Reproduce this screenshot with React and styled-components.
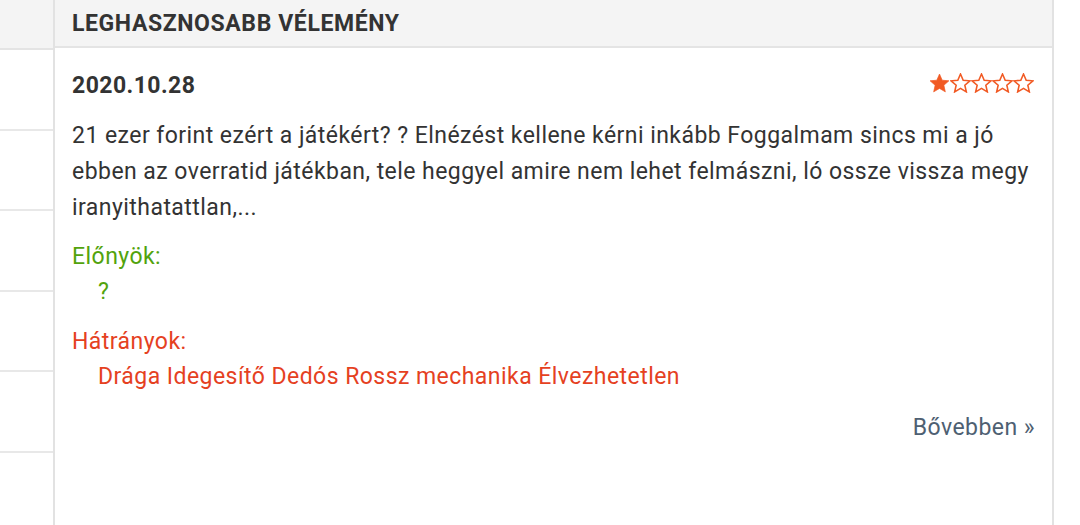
import React from 'react';
import styled, { createGlobalStyle } from 'styled-components';

const GlobalStyle = createGlobalStyle`
  html, body {
    margin: 0;
    padding: 0;
    background: #fff;
  }
  body {
    font-family: Roboto, 'Noto Sans', sans-serif;
    color: #333;
  }
`;

const Page = styled.div`
  display: flex;
  align-items: stretch;
  width: 1080px;
  height: 525px;
  overflow: hidden;
`;

const Sidebar = styled.aside`
  width: 53px;
  flex-shrink: 0;
  border-right: 2px solid #e2e2e2;
  display: flex;
  flex-direction: column;
`;

const SideHead = styled.div`
  height: 48px;
  background: #f4f4f4;
  border-bottom: 2px solid #e4e4e4;
`;

const SideRow = styled.div`
  height: 78.5px;
  border-bottom: 2px solid #e8e8e8;
`;

const Main = styled.section`
  width: 997px;
  flex-shrink: 0;
  border-right: 2px solid #e2e2e2;
  display: flex;
  flex-direction: column;
`;

const Header = styled.h2`
  margin: 0;
  height: 48px;
  box-sizing: border-box;
  padding: 0 17px;
  display: flex;
  align-items: center;
  background: #f4f4f4;
  border-bottom: 2px solid #e4e4e4;
  font-size: 23px;
  letter-spacing: 0.6px;
  font-weight: 700;
  color: #333;
  text-transform: uppercase;
`;

const Review = styled.article`
  padding: 23px 17px 0 17px;
  font-size: 23px;
  letter-spacing: 0.45px;
`;

const TopRow = styled.div`
  display: flex;
  justify-content: space-between;
  align-items: center;
  height: 28px;
  margin-bottom: 19px;
`;

const Date = styled.span`
  font-weight: 700;
  font-size: 23px;
  letter-spacing: 0.45px;
  color: #333;
`;

const Stars = styled.div`
  display: flex;
  margin: -4px 1px 0 0;
`;

const Body = styled.p`
  margin: 0 -4px 13px 0;
  line-height: 36px;
  color: #333;
`;

const ListTitle = styled.div`
  line-height: 35px;
  color: ${(p) => p.$color};
`;

const ListItems = styled.div`
  line-height: 35px;
  padding-left: 26px;
  color: ${(p) => p.$color};
  margin-bottom: ${(p) => p.$gap || 0}px;
`;

const More = styled.a`
  display: block;
  text-align: right;
  line-height: 35px;
  color: #4e6072;
  text-decoration: none;
`;

const Star = ({ filled }) => (
  <svg width="21" height="20" viewBox="0 0 24 23">
    <path
      d="M12 1.2l3.1 7.1 7.7.7-5.8 5.1 1.7 7.6L12 17.7l-6.7 4 1.7-7.6L1.2 9l7.7-.7z"
      fill={filled ? '#f15a24' : 'none'}
      stroke="#f15a24"
      strokeWidth={filled ? 0.8 : 1.8}
    />
  </svg>
);

const App = () => {
  const rating = 1;
  return (
    <>
      <GlobalStyle />
      <Page>
        <Sidebar>
          <SideHead />
          {[0, 1, 2, 3, 4].map((i) => (
            <SideRow key={i} />
          ))}
        </Sidebar>
        <Main>
          <Header>Leghasznosabb vélemény</Header>
          <Review>
            <TopRow>
              <Date>2020.10.28</Date>
              <Stars>
                {[1, 2, 3, 4, 5].map((n) => (
                  <Star key={n} filled={n <= rating} />
                ))}
              </Stars>
            </TopRow>
            <Body>
              21 ezer forint ezért a játékért? ? Elnézést kellene kérni inkább Foggalmam sincs mi a jó
              ebben az overratid játékban, tele heggyel amire nem lehet felmászni, ló ossze vissza megy
              iranyithatattlan,...
            </Body>
            <ListTitle $color="#52a30c">Előnyök:</ListTitle>
            <ListItems $color="#52a30c" $gap={15}>?</ListItems>
            <ListTitle $color="#e5411f">Hátrányok:</ListTitle>
            <ListItems $color="#e5411f" $gap={16}>
              Drága Idegesítő Dedós Rossz mechanika Élvezhetetlen
            </ListItems>
            <More href="#">Bővebben »</More>
          </Review>
        </Main>
      </Page>
    </>
  );
};

export default App;
